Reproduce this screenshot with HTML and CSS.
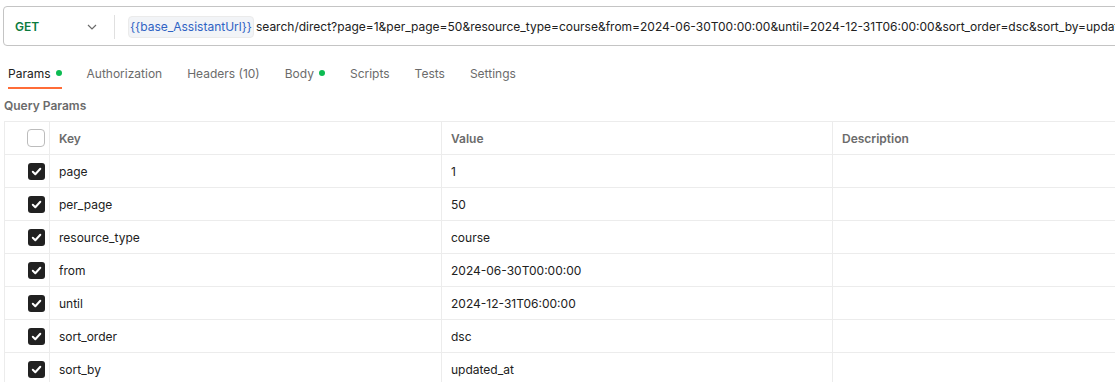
FILE: index.html
```html
<!DOCTYPE html>
<html>
<head>
<meta charset="utf-8">
<link rel="stylesheet" href="styles.css">
</head>
<body>
<div class="page">
  <div class="urlbar">
    <div class="method">
      <span class="method-name">GET</span>
      <svg class="chev" width="10" height="6" viewBox="0 0 10 6"><path d="M1 1l4 4 4-4" fill="none" stroke="#6b6b6b" stroke-width="1.2"/></svg>
    </div>
    <div class="divider"></div>
    <div class="url">
      <span class="var">{{base_AssistantUrl}}</span><span class="path">search/direct?page=1&amp;per_page=50&amp;resource_type=course&amp;from=2024-06-30T00:00:00&amp;until=2024-12-31T06:00:00&amp;sort_order=dsc&amp;sort_by=updated_at</span>
    </div>
  </div>
  <div class="tabs">
    <div class="tab active">Params<span class="dot"></span></div>
    <div class="tab">Authorization</div>
    <div class="tab">Headers (10)</div>
    <div class="tab">Body<span class="dot"></span></div>
    <div class="tab">Scripts</div>
    <div class="tab">Tests</div>
    <div class="tab">Settings</div>
  </div>
  <div class="section-title">Query Params</div>
  <div class="table">
    <div class="row head">
      <div class="cell chk"><span class="box empty"></span></div>
      <div class="cell key">Key</div>
      <div class="cell val">Value</div>
      <div class="cell desc">Description</div>
    </div>
    <div class="row">
      <div class="cell chk"><span class="box"><svg width="17" height="17" viewBox="0 0 17 17"><path d="M4.8 8.8l2.5 2.4 5-5.4" fill="none" stroke="#fff" stroke-width="2" stroke-linecap="round" stroke-linejoin="round"/></svg></span></div>
      <div class="cell key">page</div><div class="cell val">1</div><div class="cell desc"></div>
    </div>
    <div class="row">
      <div class="cell chk"><span class="box"><svg width="17" height="17" viewBox="0 0 17 17"><path d="M4.8 8.8l2.5 2.4 5-5.4" fill="none" stroke="#fff" stroke-width="2" stroke-linecap="round" stroke-linejoin="round"/></svg></span></div>
      <div class="cell key">per_page</div><div class="cell val">50</div><div class="cell desc"></div>
    </div>
    <div class="row">
      <div class="cell chk"><span class="box"><svg width="17" height="17" viewBox="0 0 17 17"><path d="M4.8 8.8l2.5 2.4 5-5.4" fill="none" stroke="#fff" stroke-width="2" stroke-linecap="round" stroke-linejoin="round"/></svg></span></div>
      <div class="cell key">resource_type</div><div class="cell val">course</div><div class="cell desc"></div>
    </div>
    <div class="row">
      <div class="cell chk"><span class="box"><svg width="17" height="17" viewBox="0 0 17 17"><path d="M4.8 8.8l2.5 2.4 5-5.4" fill="none" stroke="#fff" stroke-width="2" stroke-linecap="round" stroke-linejoin="round"/></svg></span></div>
      <div class="cell key">from</div><div class="cell val">2024-06-30T00:00:00</div><div class="cell desc"></div>
    </div>
    <div class="row">
      <div class="cell chk"><span class="box"><svg width="17" height="17" viewBox="0 0 17 17"><path d="M4.8 8.8l2.5 2.4 5-5.4" fill="none" stroke="#fff" stroke-width="2" stroke-linecap="round" stroke-linejoin="round"/></svg></span></div>
      <div class="cell key">until</div><div class="cell val">2024-12-31T06:00:00</div><div class="cell desc"></div>
    </div>
    <div class="row">
      <div class="cell chk"><span class="box"><svg width="17" height="17" viewBox="0 0 17 17"><path d="M4.8 8.8l2.5 2.4 5-5.4" fill="none" stroke="#fff" stroke-width="2" stroke-linecap="round" stroke-linejoin="round"/></svg></span></div>
      <div class="cell key">sort_order</div><div class="cell val">dsc</div><div class="cell desc"></div>
    </div>
    <div class="row">
      <div class="cell chk"><span class="box"><svg width="17" height="17" viewBox="0 0 17 17"><path d="M4.8 8.8l2.5 2.4 5-5.4" fill="none" stroke="#fff" stroke-width="2" stroke-linecap="round" stroke-linejoin="round"/></svg></span></div>
      <div class="cell key">sort_by</div><div class="cell val">updated_at</div><div class="cell desc"></div>
    </div>
  </div>
</div>
</body>
</html>
```

FILE: styles.css
```css
html, body {
  margin: 0;
  padding: 0;
  background: #ffffff;
  overflow: hidden;
}
body {
  font-family: Inter, "Noto Sans", "Liberation Sans", sans-serif;
  font-size: 12px;
  color: #212121;
}
.page {
  width: 1115px;
  height: 382px;
  overflow: hidden;
}
.urlbar {
  display: flex;
  align-items: center;
  margin: 6px -200px 0 3px;
  height: 40px;
  border: 1px solid #c4c4c4;
  border-radius: 4px;
  white-space: nowrap;
  box-sizing: border-box;
  padding-top: 1px;
}
.method {
  display: flex;
  align-items: center;
  width: 99px;
  padding-left: 11px;
  box-sizing: border-box;
  flex: none;
}
.method-name {
  font-weight: 600;
  font-size: 12px;
  color: #0b7a3e;
  width: 72px;
}
.chev {
  display: block;
}
.divider {
  flex: none;
  width: 1px;
  height: 24px;
  background: #e0e0e0;
  margin-left: 11px;
}
.url {
  display: flex;
  align-items: center;
  margin-left: 13px;
  flex: none;
  font-size: 12px;
}
.var {
  color: #2f63c4;
  background: #f2f4f7;
  border: 1px solid #ebebeb;
  border-radius: 4px;
  padding: 1px 1px;
  margin-right: 2px;
  line-height: 18px;
}
.path {
  color: #212121;
}
.tabs {
  display: flex;
  align-items: stretch;
  height: 34px;
  margin-top: 9px;
  padding-left: 8px;
}
.tab {
  display: flex;
  align-items: center;
  color: #6b6b6b;
  font-size: 12px;
  margin-right: 25px;
  border-bottom: 2px solid transparent;
  box-sizing: border-box;
  padding-top: 4px;
}
.tab.active {
  color: #212121;
  border-bottom-color: #ff6c37;
}
.dot {
  display: inline-block;
  width: 6px;
  height: 6px;
  border-radius: 50%;
  background: #0cbb52;
  margin-left: 5px;
}
.section-title {
  font-size: 12px;
  font-weight: 600;
  color: #6b6b6b;
  padding-left: 4px;
  height: 26px;
  display: flex;
  align-items: center;
  margin-top: 3px;
}
.table {
  margin-left: 4px;
  margin-right: -20px;
  margin-top: 3px;
  border-top: 1px solid #ececec;
  border-left: 1px solid #ececec;
}
.row {
  display: flex;
  height: 33px;
  border-bottom: 1px solid #ececec;
  box-sizing: border-box;
}
.cell {
  display: flex;
  align-items: center;
  box-sizing: border-box;
  border-right: 1px solid #ececec;
  padding-left: 9px;
  font-size: 12px;
}
.cell.chk {
  width: 45px;
  justify-content: flex-end;
  padding-right: 4px;
  padding-left: 0;
}
.cell.key { width: 392px; }
.cell.val { width: 391px; }
.cell.desc { flex: 1; border-right: none; }
.head .cell {
  font-size: 12px;
  font-weight: 600;
  color: #6b6b6b;
}
.box {
  width: 17px;
  height: 17px;
  border-radius: 3px;
  background: #212121;
  display: block;
}
.box svg { display: block; }
.box.empty {
  background: #ffffff;
  border: 1px solid #bcbcbc;
  width: 18px;
  height: 18px;
  box-sizing: border-box;
  border-radius: 4px;
}
```
